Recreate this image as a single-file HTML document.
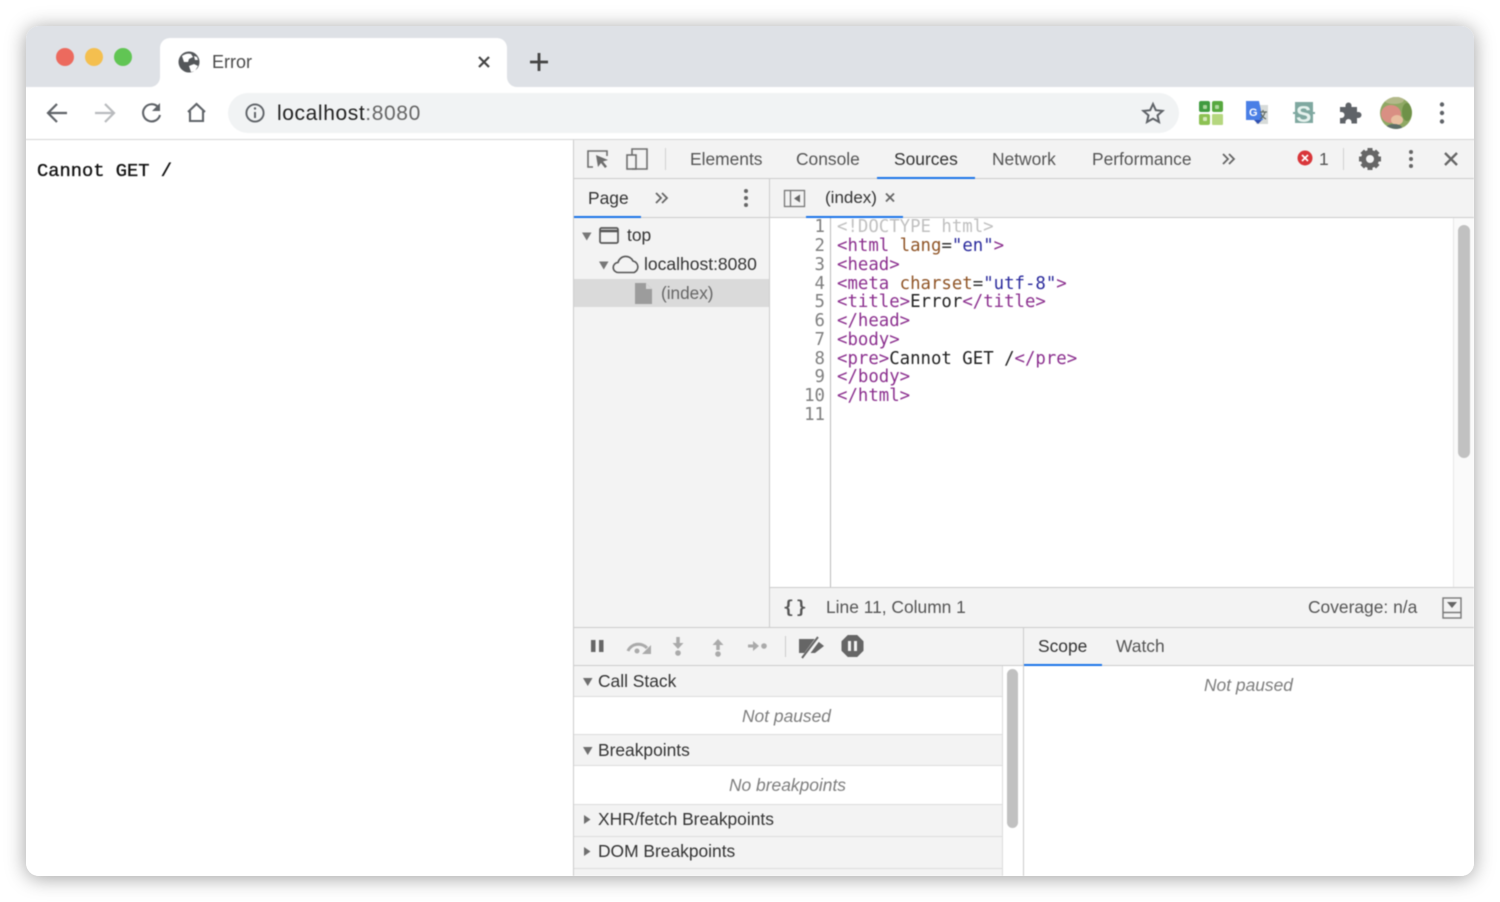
<!DOCTYPE html>
<html lang="en"><head><meta charset="utf-8"><title>Error</title>
<style>
html,body{margin:0;padding:0;width:1500px;height:902px;background:#fff;overflow:hidden}
body{position:relative;font-family:"Liberation Sans",sans-serif}
#win{position:absolute;left:26px;top:26px;width:1448px;height:850px;border-radius:13px;box-shadow:0 2px 20px rgba(0,0,0,.38)}
#clip{position:absolute;left:26px;top:26px;width:1448px;height:850px;border-radius:13px;overflow:hidden;background:#fff}
#page{position:absolute;left:-26px;top:-26px;width:1500px;height:902px;filter:blur(.45px)}
.b{position:absolute}
.t{position:absolute;white-space:pre;font-size:17.4px;height:24px;line-height:24px;color:#444}
.i{font-style:italic;color:#7d7d7d}
#code div{position:absolute;left:837px;font:17.35px/19px "DejaVu Sans Mono",monospace;white-space:pre}
#nums div{position:absolute;width:26px;left:799px;text-align:right;font:17.35px/19px "DejaVu Sans Mono",monospace;color:#7f7f7f}
#code .p{color:#8b2f8e}.o{color:#8f5426}.v{color:#2a2a9c}
svg{position:absolute;left:0;top:0}
</style></head><body>
<div id="win"></div>
<div id="clip"><div id="page">
<!-- strip -->
<div class="b" style="left:0;top:0;width:1500px;height:87px;background:#dee1e6"></div>
<div class="b" style="left:160px;top:38px;width:347px;height:49px;background:#fff;border-radius:10px 10px 0 0"></div>
<div class="b" style="left:0;top:87px;width:1500px;height:52px;background:#fff"></div>
<div class="b" style="left:0;top:139px;width:1500px;height:1px;background:#d6d6d6"></div>
<div class="b" style="left:228px;top:93px;width:951px;height:40px;background:#f1f3f4;border-radius:20px"></div>
<div class="t" style="left:212px;top:50px;font-size:18px;color:#4a4a4a">Error</div>
<div class="t" style="left:277px;top:102px;font-size:21px;color:#222;letter-spacing:.6px">localhost<span style="color:#666">:8080</span></div>
<pre class="b" style="margin:0;left:37px;top:159px;font:18.75px/24px 'Liberation Mono',monospace;color:#111;-webkit-text-stroke:.35px #111">Cannot GET /</pre>

<!-- devtools -->
<div class="b" style="left:573px;top:140px;width:901px;height:736px;background:#f3f3f3"></div>
<div class="b" style="left:573px;top:140px;width:1px;height:736px;background:#ccc"></div>
<div class="b" style="left:574px;top:178px;width:900px;height:1px;background:#ccc"></div>
<div class="b" style="left:574px;top:217px;width:900px;height:1px;background:#ccc"></div>
<div class="b" style="left:769px;top:179px;width:1px;height:448px;background:#ccc"></div>
<div class="b" style="left:877px;top:177px;width:98px;height:2px;background:#1a73e8"></div>
<div class="b" style="left:574px;top:216px;width:67px;height:2px;background:#1a73e8"></div>
<div class="b" style="left:806px;top:216px;width:97px;height:2px;background:#1a73e8"></div>
<div class="t" style="left:690px;top:147px;color:#555">Elements</div>
<div class="t" style="left:796px;top:147px;color:#555">Console</div>
<div class="t" style="left:894px;top:147px;color:#333">Sources</div>
<div class="t" style="left:992px;top:147px;color:#555">Network</div>
<div class="t" style="left:1092px;top:147px;color:#555">Performance</div>
<div class="t" style="left:1319px;top:147px;color:#555">1</div>
<div class="t" style="left:588px;top:186px;color:#333">Page</div>
<div class="t" style="left:825px;top:186px;color:#333;font-size:17px">(index)</div>

<div class="b" style="left:574px;top:279px;width:195px;height:28px;background:#dadada"></div>
<div class="t" style="left:627px;top:223px;color:#333">top</div>
<div class="t" style="left:644px;top:252px;color:#333;font-size:17.5px">localhost:8080</div>
<div class="t" style="left:661px;top:281px;color:#666;font-size:17.2px">(index)</div>

<!-- editor -->
<div class="b" style="left:770px;top:218px;width:704px;height:369px;background:#fff"></div>
<div class="b" style="left:830px;top:218px;width:1px;height:369px;background:#bbb"></div>
<div class="b" style="left:1453px;top:218px;width:21px;height:369px;background:#fafafa;border-left:1px solid #e8e8e8;box-sizing:border-box"></div>
<div class="b" style="left:1458px;top:225px;width:12px;height:233px;background:#c1c1c1;border-radius:6px"></div>
<div id="nums">
<div style="top:218px">1</div><div style="top:237px">2</div><div style="top:256px">3</div><div style="top:275px">4</div><div style="top:293px">5</div><div style="top:312px">6</div><div style="top:331px">7</div><div style="top:350px">8</div><div style="top:368px">9</div><div style="top:387px">10</div><div style="top:406px">11</div>
</div>
<div id="code">
<div style="top:218px;color:#c0c0c0">&lt;!DOCTYPE html&gt;</div>
<div style="top:237px" class="p">&lt;html <span class="o">lang</span><span style="color:#333">=</span><span class="v">"en"</span>&gt;</div>
<div style="top:256px" class="p">&lt;head&gt;</div>
<div style="top:275px" class="p">&lt;meta <span class="o">charset</span><span style="color:#333">=</span><span class="v">"utf-8"</span>&gt;</div>
<div style="top:293px" class="p">&lt;title&gt;<span style="color:#222">Error</span>&lt;/title&gt;</div>
<div style="top:312px" class="p">&lt;/head&gt;</div>
<div style="top:331px" class="p">&lt;body&gt;</div>
<div style="top:350px" class="p">&lt;pre&gt;<span style="color:#222">Cannot GET /</span>&lt;/pre&gt;</div>
<div style="top:368px" class="p">&lt;/body&gt;</div>
<div style="top:387px" class="p">&lt;/html&gt;</div>
</div>
<div class="b" style="left:770px;top:587px;width:704px;height:1px;background:#ccc"></div>
<div class="b" style="left:574px;top:627px;width:900px;height:1px;background:#ccc"></div>
<div class="t" style="left:826px;top:595px;color:#555">Line 11, Column 1</div>
<div class="t" style="left:1308px;top:595px;color:#555">Coverage: n/a</div>

<!-- debugger -->
<div class="b" style="left:1023px;top:628px;width:1px;height:248px;background:#ccc"></div>
<div class="b" style="left:1024px;top:666px;width:450px;height:210px;background:#fff"></div>
<div class="b" style="left:1024px;top:665px;width:450px;height:1px;background:#ccc"></div>
<div class="b" style="left:1024px;top:664px;width:78px;height:2px;background:#1a73e8"></div>
<div class="t" style="left:1038px;top:634px;color:#333">Scope</div>
<div class="t" style="left:1116px;top:634px;color:#555">Watch</div>
<div class="t i" style="left:1204px;top:673px">Not paused</div>

<div class="b" style="left:574px;top:665px;width:449px;height:1px;background:#ccc"></div>
<div class="b" style="left:1002px;top:666px;width:21px;height:210px;background:#fff;border-left:1px solid #ddd;box-sizing:border-box"></div>
<div class="b" style="left:1007px;top:669px;width:11px;height:159px;background:#c1c1c1;border-radius:6px"></div>
<div class="b" style="left:574px;top:696px;width:428px;height:1px;background:#ddd"></div>
<div class="b" style="left:574px;top:697px;width:428px;height:37px;background:#fff"></div>
<div class="b" style="left:574px;top:734px;width:428px;height:1px;background:#ddd"></div>
<div class="b" style="left:574px;top:765px;width:428px;height:1px;background:#ddd"></div>
<div class="b" style="left:574px;top:766px;width:428px;height:38px;background:#fff"></div>
<div class="b" style="left:574px;top:804px;width:428px;height:1px;background:#ddd"></div>
<div class="b" style="left:574px;top:836px;width:428px;height:1px;background:#ddd"></div>
<div class="b" style="left:574px;top:868px;width:428px;height:1px;background:#ddd"></div>
<div class="t" style="left:598px;top:669px;color:#333">Call Stack</div>
<div class="t i" style="left:742px;top:704px">Not paused</div>
<div class="t" style="left:598px;top:738px;color:#333">Breakpoints</div>
<div class="t i" style="left:729px;top:773px">No breakpoints</div>
<div class="t" style="left:598px;top:807px;color:#333">XHR/fetch Breakpoints</div>
<div class="t" style="left:598px;top:839px;color:#333">DOM Breakpoints</div>

<svg width="1500" height="902" viewBox="0 0 1500 902">
<!-- tab flares -->
<path d="M150 87a10 10 0 0 0 10-10v10z" fill="#fff"/><path d="M507 77a10 10 0 0 0 10 10h-10z" fill="#fff"/>
<!-- traffic lights -->
<circle cx="65" cy="57" r="9" fill="#ec6a5e"/><circle cx="94" cy="57" r="9" fill="#f4bf4f"/><circle cx="123" cy="57" r="9" fill="#61c554"/>
<!-- globe -->
<circle cx="189" cy="62" r="10.500" fill="#54575a"/>
<path d="M182 56c3-2 6-3 9-2l2 3-4 2-1 3-4 0zM189 66l5-2 4 2-3 5-4 1zM194 56l3 1 1 3-3 0z" fill="#fff"/>
<!-- tab close, plus -->
<path d="M479 57l10 10M489 57l-10 10" stroke="#444" stroke-width="2.200" fill="none"/>
<path d="M539 53v18M530 62h18" stroke="#444" stroke-width="2.800" fill="none"/>
<!-- nav -->
<path d="M67 113H49M57 104l-9 9 9 9" stroke="#5f6368" stroke-width="2.200" fill="none"/>
<path d="M95 113h18M105 104l9 9-9 9" stroke="#b9bbbe" stroke-width="2.200" fill="none"/>
<path d="M158 107a8.600 8.600 0 1 0 2 8" stroke="#5f6368" stroke-width="2.100" fill="none"/><path d="M160 103v8h-8z" fill="#5f6368"/>
<path d="M188 112l8.500-8 8.500 8M190 111v10h13v-10" stroke="#5f6368" stroke-width="2.100" fill="none"/>
<!-- info -->
<circle cx="255" cy="113" r="8.600" stroke="#5f6368" stroke-width="1.900" fill="none"/><path d="M255 112v6" stroke="#5f6368" stroke-width="2"/><circle cx="255" cy="108.500" r="1.200" fill="#5f6368"/>
<!-- star -->
<path d="M1153 104l2.800 6.200 6.800.7-5.100 4.500 1.500 6.600-6-3.400-6 3.400 1.500-6.600-5.100-4.500 6.800-.7z" stroke="#5f6368" stroke-width="2" fill="none"/>
<!-- ext 1 -->
<rect x="1199" y="101" width="11" height="11" rx="2" fill="#3f9b3f"/><rect x="1212" y="101" width="11" height="11" rx="2" fill="#57a83f"/><rect x="1199" y="114" width="11" height="11" rx="2" fill="#8cc152"/><rect x="1212" y="114" width="11" height="11" rx="1" fill="#b5d77e"/>
<rect x="1203" y="105" width="4" height="4" rx="1" fill="#a8d49a"/><rect x="1215" y="105" width="4" height="4" rx="1" fill="#b0d9a0"/><rect x="1203" y="117" width="4" height="4" rx="1" fill="#d5e8bb"/>
<!-- ext 2 translate -->
<path d="M1256 105h12v19h-12z" fill="#d7dbd9"/><path d="M1246 101h13l4 19h-17z" fill="#4a7fe6"/><path d="M1254 120h8l-4 4z" fill="#2f4fb0"/>
<text x="1249" y="116" font-family="Liberation Sans,sans-serif" font-size="11" font-weight="700" fill="#fff">G</text>
<path d="M1260 112h7M1263 110v2M1265 112c-1 4-3 6-5 7M1261 114c1 2 3 4 5 5" stroke="#5f6a66" stroke-width="1.200" fill="none"/>
<!-- ext 3 S -->
<rect x="1295" y="102" width="18" height="21" fill="#7fa8a0"/><path d="M1293 113h2M1313 113h2" stroke="#7fa8a0" stroke-width="2"/>
<text x="1296" y="122" font-family="Liberation Sans,sans-serif" font-size="23" font-weight="700" fill="#e6f2ee">S</text>
<!-- puzzle -->
<path d="M1340 107h5.500v-1.500a3 3 0 0 1 6 0v1.500h5.500v5h1.500a3 3 0 0 1 0 6h-1.500v5.500h-5.500v-1.500a3 3 0 0 0-6 0v1.500h-5.500v-5.500h1.500a3 3 0 0 0 0-6h-1.500z" fill="#5f6368"/>
<!-- avatar -->
<defs><clipPath id="av"><circle cx="1396" cy="113" r="16"/></clipPath></defs>
<g clip-path="url(#av)"><rect x="1380" y="97" width="32" height="32" fill="#8fa864"/><ellipse cx="1391" cy="114" rx="10" ry="9" fill="#d98f83"/><ellipse cx="1397" cy="120" rx="6" ry="5" fill="#e8bfa0"/><ellipse cx="1394" cy="128" rx="8" ry="4" fill="#5b6e68"/><ellipse cx="1394" cy="100" rx="10" ry="4" fill="#b3b98a"/><ellipse cx="1407" cy="112" rx="5" ry="9" fill="#6f9148"/></g>
<!-- chrome menu -->
<circle cx="1442" cy="104.500" r="2.200" fill="#5f6368"/><circle cx="1442" cy="113" r="2.200" fill="#5f6368"/><circle cx="1442" cy="121.500" r="2.200" fill="#5f6368"/>

<!-- devtools toolbar -->
<path d="M596 151h-8v16h5" stroke="#6e6e6e" stroke-width="1.600" fill="none"/><path d="M596 151h11v5" stroke="#6e6e6e" stroke-width="1.600" fill="none"/><path d="M596 155l12 5-5 1.500 4 5-2 1.500-4-5-3 4z" fill="#6e6e6e"/>
<path d="M632 155v-6h15v20h-15" stroke="#6e6e6e" stroke-width="1.600" fill="none"/><rect x="627" y="155" width="9" height="14" stroke="#6e6e6e" stroke-width="1.600" fill="none"/>
<path d="M665.500 148v22" stroke="#d0d0d0"/><path d="M1343.500 148v22" stroke="#d0d0d0"/>
<path d="M1223 154l5 5-5 5M1229 154l5 5-5 5" stroke="#666" stroke-width="1.800" fill="none"/>
<circle cx="1305" cy="158" r="7.500" fill="#d9363a"/><path d="M1302 155l6 6M1308 155l-6 6" stroke="#fff" stroke-width="1.700"/>
<!-- gear -->
<g transform="translate(1370 159)"><circle r="6.500" stroke="#666" stroke-width="5" fill="none"/><path d="M-2.500-11h5v5h-5zM-2.500 6h5v5h-5zM-11-2.500h5v5h-5zM6-2.500h5v5h-5z" fill="#666"/><path d="M-2.500-11h5v5h-5zM-2.500 6h5v5h-5zM-11-2.500h5v5h-5zM6-2.500h5v5h-5z" fill="#666" transform="rotate(45)"/></g>
<circle cx="1411" cy="152" r="2" fill="#666"/><circle cx="1411" cy="159" r="2" fill="#666"/><circle cx="1411" cy="166" r="2" fill="#666"/>
<path d="M1445 153l12 12M1457 153l-12 12" stroke="#666" stroke-width="2.300"/>
<!-- page row -->
<path d="M656 193l5 5-5 5M662 193l5 5-5 5" stroke="#666" stroke-width="1.800" fill="none"/>
<circle cx="746" cy="191" r="2" fill="#666"/><circle cx="746" cy="198" r="2" fill="#666"/><circle cx="746" cy="205" r="2" fill="#666"/>
<rect x="784.500" y="190.500" width="20" height="16" stroke="#777" stroke-width="1.300" fill="none"/><path d="M790.500 190.500v16" stroke="#777" stroke-width="1.300"/><path d="M800 194.500v8l-6-4z" fill="#666"/>
<path d="M886 193.500l8 8M894 193.500l-8 8" stroke="#666" stroke-width="1.800"/>
<!-- tree -->
<path d="M582 232.500h9.500l-4.750 8z" fill="#777"/>
<rect x="600" y="228" width="18" height="15" rx="1.500" stroke="#555" stroke-width="1.700" fill="none"/><path d="M600 231h18" stroke="#555" stroke-width="2.500"/>
<path d="M599 261.500h9.500l-4.750 8z" fill="#777"/>
<path d="M620 272.500h-1.500a5 5 0 0 1-.5-10 8 8 0 0 1 15-1.500 6 6 0 0 1 1 11.500z" stroke="#555" stroke-width="1.600" fill="none"/>
<path d="M635 283h11l6 6v15h-17z" fill="#9c9c9c"/><path d="M646 283v6h6z" fill="#d8d8d8"/>
<!-- status -->
<text x="783" y="613" font-family="DejaVu Sans Mono,monospace" font-size="18" font-weight="700" fill="#555" letter-spacing="2">{}</text>
<rect x="1443" y="598" width="18" height="20" stroke="#777" stroke-width="1.400" fill="none"/><path d="M1443 612.500h18" stroke="#777" stroke-width="1.400"/><path d="M1447 602h10l-5 6z" fill="#666"/>
<!-- debug toolbar -->
<rect x="591" y="640" width="4.500" height="12" fill="#666"/><rect x="599" y="640" width="4.500" height="12" fill="#666"/>
<path d="M628 651a11 10 0 0 1 19-3" stroke="#aaa" stroke-width="3" fill="none"/><path d="M651 645v9h-9z" fill="#aaa"/><circle cx="637" cy="651" r="2.500" fill="#aaa"/>
<path d="M678 637v8" stroke="#aaa" stroke-width="3.500"/><path d="M672.500 643h11l-5.500 6z" fill="#aaa"/><circle cx="678" cy="653" r="2.800" fill="#aaa"/>
<path d="M718 644v6" stroke="#aaa" stroke-width="3.500"/><path d="M712.500 645h11l-5.500-6z" fill="#aaa"/><circle cx="718" cy="654" r="2.800" fill="#aaa"/>
<path d="M748 646h6" stroke="#aaa" stroke-width="3"/><path d="M753 641l6 5-6 5z" fill="#aaa"/><circle cx="764" cy="646" r="2.800" fill="#aaa"/>
<path d="M785.500 636v21" stroke="#ccc"/>
<path d="M799 639h16l9 7-9 7h-16z" fill="#666"/><path d="M803 659l17-23" stroke="#f3f3f3" stroke-width="5"/><path d="M802 658l16-21" stroke="#666" stroke-width="2"/>
<path d="M848 635.500h9l6 6v9l-6 6h-9l-6-6v-9z" fill="#666" stroke="#666" stroke-width="1" stroke-linejoin="round"/><rect x="848" y="641" width="3" height="10" fill="#f3f3f3"/><rect x="854" y="641" width="3" height="10" fill="#f3f3f3"/>
<!-- section arrows -->
<path d="M583 678h9.500l-4.750 8z" fill="#6e6e6e"/>
<path d="M583 747h9.500l-4.750 8z" fill="#6e6e6e"/>
<path d="M584 815v9l6.500-4.500z" fill="#6e6e6e"/>
<path d="M584 847v9l6.500-4.500z" fill="#6e6e6e"/>
</svg>
</div></div>
</body></html>
